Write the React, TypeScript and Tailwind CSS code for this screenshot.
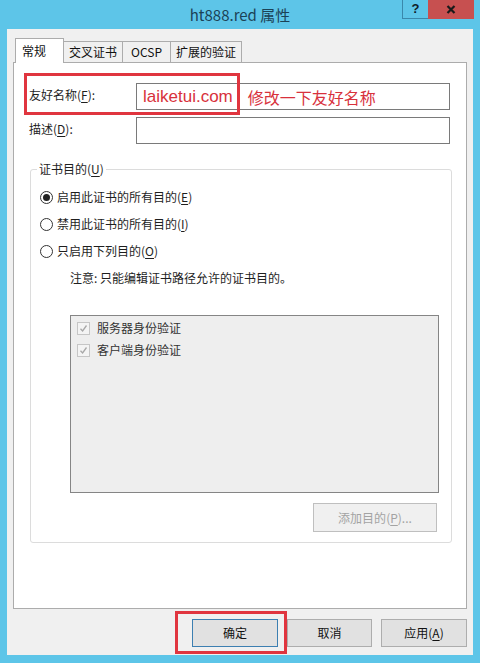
import React from 'react';

const cjk = { fontFamily: '"Noto Sans CJK SC", "Noto Sans", sans-serif' };

// underlined access key, e.g. (F)
const Key = ({ k }: { k: string }) => (
  <>
    (<span className="underline underline-offset-2">{k}</span>)
  </>
);

const Radio = ({ checked, children }: { checked?: boolean; children: React.ReactNode }) => (
  <div className="flex items-center h-[16px]">
    <span className="w-[13px] h-[13px] rounded-full border border-[#333] bg-white flex items-center justify-center ml-[9px]">
      {checked && <span className="w-[7px] h-[7px] rounded-full bg-[#222]" />}
    </span>
    <span className="ml-[4px] text-[12px] text-[#1e1e1e] leading-[16px]">{children}</span>
  </div>
);

const DisabledCheck = ({ label }: { label: string }) => (
  <div className="flex items-center h-[22px]">
    <span className="w-[13px] h-[13px] border border-[#c6c6c6] bg-[#f4f4f4] flex items-center justify-center ml-[6px]">
      <svg width="9" height="9" viewBox="0 0 9 9">
        <path d="M1.5 4.8 L3.6 7 L7.5 1.5" fill="none" stroke="#a8a8a8" strokeWidth="1.3" />
      </svg>
    </span>
    <span className="ml-[7px] text-[12px] text-[#333]">{label}</span>
  </div>
);

const tabs = [
  { name: '交叉证书', w: 'w-[59px]' },
  { name: 'OCSP', w: 'w-[48px]' },
  { name: '扩展的验证', w: 'w-[71px]' },
];

const App: React.FC = () => {
  return (
    <div className="w-[480px] h-[663px] bg-[#5dc5e8] flex flex-col overflow-hidden" style={cjk}>
      {/* title bar */}
      <div className="h-[29px] grid grid-cols-[1fr_auto_1fr] items-start">
        <div />
        <div className="pt-[4px] text-[15px] text-[#1b4256]">ht888.red 属性</div>
        <div className="flex justify-end pr-[6px]">
          <div
            className="w-[26px] h-[19px] border-l border-b border-[#3a88ab] flex items-center justify-center text-[13px] font-bold text-[#10202a]"
            style={{ fontFamily: '"Liberation Sans", Arial, sans-serif' }}
          >
            ?
          </div>
          <div className="w-[46px] h-[19px] bg-[#c75050] flex items-center justify-center">
            <svg width="10" height="9" viewBox="0 0 10 9">
              <path d="M1.5 1 L8.5 8 M8.5 1 L1.5 8" stroke="#1a1a1a" strokeWidth="2.2" />
            </svg>
          </div>
        </div>
      </div>

      {/* dialog body */}
      <div className="mx-[7px] h-[626px] bg-[#f0f0f0] flex flex-col px-[6px] pt-[9px]">
        {/* tab strip */}
        <div className="flex items-end h-[24px] pl-[2px]">
          <div className="w-[49px] h-[25px] -mb-px relative z-10 bg-white border border-b-0 border-[#acacac] text-[12px] text-[#111] pl-[6px] pt-[3px]">
            常规
          </div>
          {tabs.map((t) => (
            <div
              key={t.name}
              className={`${t.w} h-[21px] bg-[#f0f0f0] border border-l-0 border-b-0 border-[#acacac] text-[12px] text-[#111] flex items-center justify-center`}
            >
              {t.name}
            </div>
          ))}
        </div>

        {/* tab panel */}
        <div className="h-[547px] bg-white border border-[#acacac] flex flex-col">
          <div className="relative flex items-start mt-[20px] pl-[15px]">
            <div className="w-[107px] pt-[3px] text-[12px] text-[#1e1e1e]">
              友好名称<Key k="F" />:
            </div>
            <div className="w-[314px] h-[27px] border border-[#7a7a7a] flex items-center pl-[6px]">
              <span className="text-[17px] text-[#d8313c]" style={{ fontFamily: '"Liberation Sans", Arial, sans-serif' }}>
                laiketui.com
              </span>
              <span className="ml-[15px] text-[16px] text-[#d8313c]">修改一下友好名称</span>
            </div>
            <div className="absolute left-[10px] -top-[10px] w-[216px] h-[42px] border-[3px] border-[#e0353f]" />
          </div>

          <div className="flex items-start mt-[7px] pl-[15px]">
            <div className="w-[107px] pt-[3px] text-[12px] text-[#1e1e1e]">
              描述<Key k="D" />:
            </div>
            <div className="w-[314px] h-[27px] border border-[#7a7a7a]" />
          </div>

          {/* group box */}
          <fieldset className="mt-[17px] ml-[16px] w-[422px] border border-[#dcdcdc] rounded-[3px] px-0 pt-[12px] pb-[10px] flex flex-col">
            <legend className="ml-[6px] px-[2px] text-[12px] leading-[16px] text-[#1e1e1e]">
              证书目的<Key k="U" />
            </legend>
            <div className="flex flex-col gap-[11px]">
              <Radio checked>
                启用此证书的所有目的<Key k="E" />
              </Radio>
              <Radio>
                禁用此证书的所有目的<Key k="I" />
              </Radio>
              <Radio>
                只启用下列目的<Key k="O" />
              </Radio>
              <div className="h-[16px] pl-[39px] text-[12px] leading-[16px] text-[#1e1e1e]">
                注意: 只能编辑证书路径允许的证书目的。
              </div>
            </div>
            <div className="mt-[29px] ml-[39px] w-[369px] h-[178px] bg-[#eeeeee] border border-[#858585] pt-[1px]">
              <DisabledCheck label="服务器身份验证" />
              <DisabledCheck label="客户端身份验证" />
            </div>
            <div className="mt-[10px] self-end mr-[14px] w-[124px] h-[29px] bg-[#f0f0f0] border border-[#bfbfbf] flex items-center justify-center text-[12px] text-[#a3a3a3]">
              添加目的<Key k="P" />...
            </div>
          </fieldset>
        </div>

        {/* dialog buttons */}
        <div className="mt-[10px] h-[28px] flex justify-end gap-[9px]">
          <div className="relative w-[86px] h-[28px] bg-[#e1e1e1] border border-[#3c7fb1] flex items-center justify-center text-[12px] text-[#111]">
            确定
            <div className="absolute -left-[18px] -top-[9px] w-[112px] h-[43px] border-[3px] border-[#e0353f]" />
          </div>
          <div className="w-[85px] h-[28px] bg-[#e1e1e1] border border-[#adadad] flex items-center justify-center text-[12px] text-[#111]">
            取消
          </div>
          <div className="w-[86px] h-[28px] bg-[#e1e1e1] border border-[#adadad] flex items-center justify-center text-[12px] text-[#111]">
            应用<Key k="A" />
          </div>
        </div>
      </div>
    </div>
  );
};

export default App;
